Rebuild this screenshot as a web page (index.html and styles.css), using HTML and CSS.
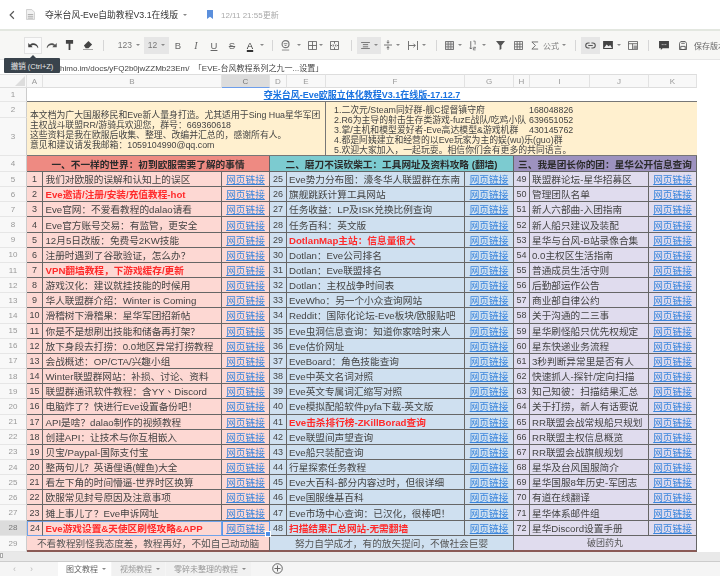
FILE: index.html
```html
<!DOCTYPE html>
<html lang="zh-CN">
<head>
<meta charset="utf-8">
<title>夺米台风-Eve自助教程V3.1在线版</title>
<link rel="stylesheet" href="styles.css">
</head>
<body>
<div class="app">
  <header class="topbar">
    <svg class="ic back" viewBox="0 0 8 12" width="6" height="10"><path d="M6.5 1 1.5 6l5 5" fill="none" stroke="#555" stroke-width="1.5"/></svg>
    <svg class="ic doc" viewBox="0 0 10 12" width="9" height="11"><path d="M.5.5h6l3 3v8H.5z" fill="#f1f1f1" stroke="#ccc"/><path d="M2 6h6M2 8h6M2 10h6" stroke="#aaa"/></svg>
    <span class="doc-title">夺米台风-Eve自助教程V3.1在线版</span>
    <span class="caret title-caret"></span>
    <svg class="ic mark" viewBox="0 0 6 9" width="6" height="9"><path d="M0 0h6v9L3 6.8 0 9z" fill="#5b8fdc"/></svg>
    <span class="updated">12/11 21:55更新</span>
  </header>

  <div class="toolbar">
    <span class="tool boxed"><svg viewBox="0 0 12 8" width="11" height="7"><path d="M11 7C9.500 3.500 6 2.500 3.500 4L5 6H0V1l2 2C5 0 10 1 11.500 6z" fill="#444"/></svg></span>
    <span class="tool"><svg viewBox="0 0 12 8" width="11" height="7"><path d="M1 7C2.500 3.500 6 2.500 8.500 4L7 6h5V1l-2 2C7 0 2 1 .5 6z" fill="#555"/></svg></span>
    <span class="tool"><svg viewBox="0 0 10 11" width="9" height="10"><path d="M1 0h8v4H6v7H4V4H1z" fill="#444"/></svg></span>
    <span class="tool"><svg viewBox="0 0 11 11" width="10" height="10"><path d="M1 6 6 1l4 4-4 4H3z" fill="#444"/><path d="M0 10.500h11" stroke="#999"/></svg></span>
    <span class="sep"></span>
    <span class="tool num">123</span>
    <span class="caret"></span>
    <span class="tool active">12<span class="caret"></span></span>
    <span class="tool letter">B</span>
    <span class="tool letter it">I</span>
    <span class="tool letter ul">U</span>
    <span class="tool letter st">S</span>
    <span class="tool letter color">A</span>
    <span class="caret"></span>
    <span class="sep"></span>
    <span class="tool"><svg viewBox="0 0 11 12" width="10" height="11"><circle cx="5" cy="4.500" r="3.800" fill="none" stroke="#777" stroke-width="1.300"/><path d="M3 4h4M4 6h2" stroke="#777"/><path d="M1 11h8" stroke="#aaa" stroke-width="1.500"/></svg></span>
    <span class="caret"></span>
    <span class="tool"><svg viewBox="0 0 10 10" width="9" height="9"><path d="M.5.5h9v9h-9zM5 .5v9M.5 5h9" fill="none" stroke="#666"/></svg></span>
    <span class="caret"></span>
    <span class="tool"><svg viewBox="0 0 10 10" width="9" height="9"><path d="M.5.5h9v9h-9zM5 .5v2.500M5 7v2.500M.5 5h2M7.500 5h2M3 4 4.500 5 3 6M7 4 5.500 5 7 6" fill="none" stroke="#666"/></svg></span>
    <span class="sep"></span>
    <span class="tool active"><svg viewBox="0 0 10 8" width="9" height="7"><path d="M0 .5h10M2 3h6M2 5.500h6M0 7.500h10" stroke="#666"/></svg><span class="caret"></span></span>
    <span class="tool pair"><svg viewBox="0 0 9 11" width="8" height="10"><path d="M0 5.500h9M4.500 0v3.500M4.500 7v4M3 2l1.500 1.500L6 2M3 9l1.500-1.500L6 9" fill="none" stroke="#666"/></svg><span class="caret"></span></span>
    <span class="tool pair"><svg viewBox="0 0 11 10" width="10" height="9"><path d="M.5 0v10M10.500 0v10M1 5h7M6 3l2 2-2 2" fill="none" stroke="#666"/></svg><span class="caret"></span></span>
    <span class="sep"></span>
    <span class="tool pair"><svg viewBox="0 0 10 10" width="9" height="9"><path d="M.5.5h9v9h-9z" fill="#ddd" stroke="#666"/><path d="M3.500 1v8M6.500 1v8M1 3.500h8M1 6.500h8" stroke="#777"/></svg><span class="caret"></span></span>
    <span class="tool"><svg viewBox="0 0 8 12" width="7" height="11"><path d="M2 1v9M.5 8.500 2 10l1.500-1.500" fill="none" stroke="#666"/><path d="M5 1h2v4M5 8h2.500v1H5v2h2.500" fill="none" stroke="#777"/></svg></span>
    <span class="caret"></span>
    <span class="tool"><svg viewBox="0 0 10 10" width="9" height="9"><path d="M0 0h10L6 5v4L4 10V5z" fill="#555"/></svg></span>
    <span class="tool"><svg viewBox="0 0 10 10" width="9" height="9"><path d="M.5.5h9v9h-9zM3.500 1v8M6.500 1v8M1 3.500h8M1 6.500h8" fill="none" stroke="#666"/></svg></span>
    <span class="tool"><svg viewBox="0 0 9 10" width="8" height="9"><path d="M8 1H1l4 4-4 4h7" fill="none" stroke="#666"/></svg></span>
    <span class="tool word">公式</span>
    <span class="caret"></span>
    <span class="sep"></span>
    <span class="tool active"><svg viewBox="0 0 12 7" width="11" height="7"><path d="M5 .8H3.500a2.700 2.700 0 0 0 0 5.400H5M7 .8h1.500a2.700 2.700 0 0 1 0 5.400H7M3.500 3.500h5" fill="none" stroke="#555" stroke-width="1.200"/></svg></span>
    <span class="tool pair"><svg viewBox="0 0 11 9" width="10" height="8"><path d="M0 0h11v9H0z" fill="#444"/><path d="M1 8l3-4 2 2 2-1.500L10 8z" fill="#eee"/></svg><span class="caret"></span></span>
    <span class="tool"><svg viewBox="0 0 11 10" width="10" height="9"><path d="M.5.5h10v9H.5zM.5 3h10M5 3v6.500" fill="none" stroke="#666"/><path d="M6 5h4v4H6z" fill="#999"/></svg></span>
    <span class="sep"></span>
    <span class="tool"><svg viewBox="0 0 11 10" width="10" height="9"><path d="M0 0h11v8H4L2 10V8H0z" fill="#444"/><path d="M3 4h1M5 4h1M7 4h1" stroke="#eee"/></svg></span>
    <span class="tool"><svg viewBox="0 0 9 10" width="8" height="9"><path d="M.5 2.500 2 .5h5l1.500 2v7h-8z" fill="none" stroke="#555"/><path d="M2.500 2.500h4M2 6h5v3.500H2z" fill="none" stroke="#555"/></svg></span>
    <span class="tool save-text">保存版本</span>
  </div>

  <div class="tooltip">撤销 (Ctrl+Z)</div>

  <div class="formula">https://shimo.im/docs/yFQ2b0jwZZMb23Em/&nbsp; 「EVE-台风教程系列之九一...设置」</div>

  <main class="sheet">
    <div class="corner"></div>
    <div class="ch">A</div><div class="ch">B</div><div class="ch ch-on">C</div><div class="ch">D</div><div class="ch">E</div><div class="ch">F</div><div class="ch">G</div><div class="ch">H</div><div class="ch">I</div><div class="ch">J</div><div class="ch">K</div>

    <div class="rh">1</div>
    <div class="sheet-title"><a>夺米台风-Eve欧服立体化教程V3.1在线版-17.12.7</a></div>

    <div class="rh">2</div>
    <div class="intro intro-left">
      <p>本文档为广大国服移民和Eve新人量身打造。尤其适用于Sing Hua星华军团</p>
      <p>主权战斗联盟RR/游骑兵欢迎您，群号：669360618</p>
      <p>这些资料是我在欧服后收集、整理、改编并汇总的，感谢所有人。</p>
      <p>意见和建议请发我邮箱：1059104990@qq.com</p>
    </div>
    <div class="intro intro-right">
      <p><span class="group">1.二次元/Steam同好群-舰C提督镇守府</span>168048826</p>
      <p><span class="group">2.R6为主导的射击生存类游戏-fuzE战队/吃鸡小队</span>639651052</p>
      <p><span class="group">3.掌/主机和模型爱好者-Eve高达模型&amp;游戏机群</span>430145762</p>
      <p>4.都是阿姨建立和经营的以Eve玩家为主的娱(wu)乐(guo)群</p>
      <p>5.欢迎大家加入，一起玩耍。相信你们会有更多的共同语言。</p>
    </div>
    <div class="rh">3</div>

    <div class="rh">4</div>
    <div class="head h1">一、不一样的世界：初到欧服需要了解的事情</div>
    <div class="head h2">二、磨刀不误砍柴工：工具网址及资料攻略 (翻墙)</div>
    <div class="head h3">三、我是团长你的团：星华公开信息查询</div>

    <div class="rh">5</div><div class="n s1">1</div><div class="t s1">我们对欧服的误解和认知上的误区</div><a class="l s1">网页链接</a><div class="n s2">25</div><div class="t s2">Eve势力分布图：濠冬华人联盟群在东南</div><a class="l s2">网页链接</a><div class="n s3">49</div><div class="t s3">联盟群论坛-星华招募区</div><a class="l s3">网页链接</a>
    <div class="rh">6</div><div class="n s1">2</div><div class="t s1 hot">Eve邀请/注册/安装/充值教程-hot</div><a class="l s1">网页链接</a><div class="n s2">26</div><div class="t s2">旗舰跳跃计算工具网站</div><a class="l s2">网页链接</a><div class="n s3">50</div><div class="t s3">管理团队名单</div><a class="l s3">网页链接</a>
    <div class="rh">7</div><div class="n s1">3</div><div class="t s1">Eve官网：不爱看教程的dalao请看</div><a class="l s1">网页链接</a><div class="n s2">27</div><div class="t s2">任务收益：LP及ISK兑换比例查询</div><a class="l s2">网页链接</a><div class="n s3">51</div><div class="t s3">新人六部曲-入团指南</div><a class="l s3">网页链接</a>
    <div class="rh">8</div><div class="n s1">4</div><div class="t s1">Eve官方账号交易：有监管，更安全</div><a class="l s1">网页链接</a><div class="n s2">28</div><div class="t s2">任务百科：英文版</div><a class="l s2">网页链接</a><div class="n s3">52</div><div class="t s3">新人船只建议及装配</div><a class="l s3">网页链接</a>
    <div class="rh">9</div><div class="n s1">5</div><div class="t s1">12月5日改版：免费号2KW技能</div><a class="l s1">网页链接</a><div class="n s2">29</div><div class="t s2 hot">DotlanMap主站：信息量很大</div><a class="l s2">网页链接</a><div class="n s3">53</div><div class="t s3">星华与台风-B站录像合集</div><a class="l s3">网页链接</a>
    <div class="rh">10</div><div class="n s1">6</div><div class="t s1">注册时遇到了谷歌验证，怎么办？</div><a class="l s1">网页链接</a><div class="n s2">30</div><div class="t s2">Dotlan：Eve公司排名</div><a class="l s2">网页链接</a><div class="n s3">54</div><div class="t s3">0.0主权区生活指南</div><a class="l s3">网页链接</a>
    <div class="rh">11</div><div class="n s1">7</div><div class="t s1 hot">VPN翻墙教程，下游戏缓存/更新</div><a class="l s1">网页链接</a><div class="n s2">31</div><div class="t s2">Dotlan：Eve联盟排名</div><a class="l s2">网页链接</a><div class="n s3">55</div><div class="t s3">普通成员生活守则</div><a class="l s3">网页链接</a>
    <div class="rh">12</div><div class="n s1">8</div><div class="t s1">游戏汉化：建议就挂技能的时候用</div><a class="l s1">网页链接</a><div class="n s2">32</div><div class="t s2">Dotlan：主权战争时间表</div><a class="l s2">网页链接</a><div class="n s3">56</div><div class="t s3">后勤部运作公告</div><a class="l s3">网页链接</a>
    <div class="rh">13</div><div class="n s1">9</div><div class="t s1">华人联盟群介绍：Winter is Coming</div><a class="l s1">网页链接</a><div class="n s2">33</div><div class="t s2">EveWho：另一个小众查询网站</div><a class="l s2">网页链接</a><div class="n s3">57</div><div class="t s3">商业部自律公约</div><a class="l s3">网页链接</a>
    <div class="rh">14</div><div class="n s1">10</div><div class="t s1">滑稽树下滑稽果：星华军团招新帖</div><a class="l s1">网页链接</a><div class="n s2">34</div><div class="t s2">Reddit：国际化论坛-Eve板块/欧服贴吧</div><a class="l s2">网页链接</a><div class="n s3">58</div><div class="t s3">关于沟通的二三事</div><a class="l s3">网页链接</a>
    <div class="rh">15</div><div class="n s1">11</div><div class="t s1">你是不是想刷出技能和储备再打架？</div><a class="l s1">网页链接</a><div class="n s2">35</div><div class="t s2">Eve虫洞信息查询：知道你家啥时来人</div><a class="l s2">网页链接</a><div class="n s3">59</div><div class="t s3">星华刷怪船只优先权规定</div><a class="l s3">网页链接</a>
    <div class="rh">16</div><div class="n s1">12</div><div class="t s1">放下身段去打捞：0.0地区异常打捞教程</div><a class="l s1">网页链接</a><div class="n s2">36</div><div class="t s2">Eve估价网址</div><a class="l s2">网页链接</a><div class="n s3">60</div><div class="t s3">星东快递业务流程</div><a class="l s3">网页链接</a>
    <div class="rh">17</div><div class="n s1">13</div><div class="t s1">会战概述：OP/CTA/兴趣小组</div><a class="l s1">网页链接</a><div class="n s2">37</div><div class="t s2">EveBoard：角色技能查询</div><a class="l s2">网页链接</a><div class="n s3">61</div><div class="t s3">3秒判断异常里是否有人</div><a class="l s3">网页链接</a>
    <div class="rh">18</div><div class="n s1">14</div><div class="t s1">Winter联盟群网站：补损、讨论、资料</div><a class="l s1">网页链接</a><div class="n s2">38</div><div class="t s2">Eve中英文名词对照</div><a class="l s2">网页链接</a><div class="n s3">62</div><div class="t s3">快速抓人-探针/定向扫描</div><a class="l s3">网页链接</a>
    <div class="rh">19</div><div class="n s1">15</div><div class="t s1">联盟群通讯软件教程：含YY、Discord</div><a class="l s1">网页链接</a><div class="n s2">39</div><div class="t s2">Eve英文专属词汇缩写对照</div><a class="l s2">网页链接</a><div class="n s3">63</div><div class="t s3">知己知彼：扫描结果汇总</div><a class="l s3">网页链接</a>
    <div class="rh">20</div><div class="n s1">16</div><div class="t s1">电脑炸了？快进行Eve设置备份吧！</div><a class="l s1">网页链接</a><div class="n s2">40</div><div class="t s2">Eve模拟配船软件pyfa下载-英文版</div><a class="l s2">网页链接</a><div class="n s3">64</div><div class="t s3">关于打捞，新人有话要说</div><a class="l s3">网页链接</a>
    <div class="rh">21</div><div class="n s1">17</div><div class="t s1">API是啥？dalao制作的视频教程</div><a class="l s1">网页链接</a><div class="n s2">41</div><div class="t s2 hot">Eve击杀排行榜-ZKillBorad查询</div><a class="l s2">网页链接</a><div class="n s3">65</div><div class="t s3">RR联盟会战常规船只规划</div><a class="l s3">网页链接</a>
    <div class="rh">22</div><div class="n s1">18</div><div class="t s1">创建API：让技术与你互相嵌入</div><a class="l s1">网页链接</a><div class="n s2">42</div><div class="t s2">Eve联盟间声望查询</div><a class="l s2">网页链接</a><div class="n s3">66</div><div class="t s3">RR联盟主权信息概览</div><a class="l s3">网页链接</a>
    <div class="rh">23</div><div class="n s1">19</div><div class="t s1">贝宝/Paypal-国际支付宝</div><a class="l s1">网页链接</a><div class="n s2">43</div><div class="t s2">Eve船只装配查询</div><a class="l s2">网页链接</a><div class="n s3">67</div><div class="t s3">RR联盟会战旗舰规划</div><a class="l s3">网页链接</a>
    <div class="rh">24</div><div class="n s1">20</div><div class="t s1">整两句儿？英语俚语(鲤鱼)大全</div><a class="l s1">网页链接</a><div class="n s2">44</div><div class="t s2">行星探索任务教程</div><a class="l s2">网页链接</a><div class="n s3">68</div><div class="t s3">星华及台风国服简介</div><a class="l s3">网页链接</a>
    <div class="rh">25</div><div class="n s1">21</div><div class="t s1">看左下角的时间懵逼-世界时区换算</div><a class="l s1">网页链接</a><div class="n s2">45</div><div class="t s2">Eve大百科-部分内容过时，但很详细</div><a class="l s2">网页链接</a><div class="n s3">69</div><div class="t s3">星华国服8年历史-军团志</div><a class="l s3">网页链接</a>
    <div class="rh">26</div><div class="n s1">22</div><div class="t s1">欧服常见封号原因及注意事项</div><a class="l s1">网页链接</a><div class="n s2">46</div><div class="t s2">Eve国服维基百科</div><a class="l s2">网页链接</a><div class="n s3">70</div><div class="t s3">有道在线翻译</div><a class="l s3">网页链接</a>
    <div class="rh">27</div><div class="n s1">23</div><div class="t s1">摊上事儿了？Eve申诉网址</div><a class="l s1">网页链接</a><div class="n s2">47</div><div class="t s2">Eve市场中心查询：已汉化，很棒吧！</div><a class="l s2">网页链接</a><div class="n s3">71</div><div class="t s3">星华体系邮件组</div><a class="l s3">网页链接</a>
    <div class="rh rh-on">28</div><div class="n s1 sel-a">24</div><div class="t s1 hot sel-b">Eve游戏设置&amp;天使区刷怪攻略&amp;APP</div><a class="l s1 sel-c">网页链接</a><div class="n s2">48</div><div class="t s2 hot">扫描结果汇总网站-无需翻墙</div><a class="l s2">网页链接</a><div class="n s3">72</div><div class="t s3">星华Discord设置手册</div><a class="l s3">网页链接</a>
    <div class="rh">29</div><div class="foot f1">不看教程别怪我态度差，教程再好，不如自己动动脑</div><div class="foot f2">努力自学成才，有的放矢提问，不做社会巨婴</div><div class="foot f3">破团药丸</div>
  </main>

  <div class="hscroll"><span class="hscroll-btn"></span></div>

  <nav class="tabs">
    <span class="nav-arrow">‹</span>
    <span class="nav-arrow nav-next">›</span>
    <span class="tab tab-on">图文教程<span class="caret"></span></span>
    <span class="tab">视频教程<span class="caret"></span></span>
    <span class="tab">零碎未整理的教程<span class="caret"></span></span>
    <svg class="add" viewBox="0 0 11 11" width="11" height="11"><circle cx="5.500" cy="5.500" r="4.800" fill="none" stroke="#666"/><path d="M5.500 2.500v6M2.500 5.500h6" stroke="#666"/></svg>
  </nav>
</div>
</body>
</html>
```

FILE: styles.css
```css
* { box-sizing: border-box; }
html, body { margin: 0; padding: 0; }
body { width: 720px; height: 576px; overflow: hidden; background: #fff; }

.app {
  position: relative;
  width: 720px;
  height: 576px;
  display: flex;
  flex-direction: column;
  overflow: hidden;
  font-family: "Liberation Sans", "Noto Sans CJK SC", sans-serif;
  color: #444;
  filter: blur(0.35px);
}
p { margin: 0; }

/* top bar */
.topbar {
  height: 29px;
  flex: none;
  display: flex;
  align-items: center;
  padding-left: 9px;
}
.back { margin-right: 11px; }
.doc { margin-right: 10px; }
.doc-title { font-size: 8.8px; color: #333; width: 129px; white-space: nowrap; }
.title-caret { margin-left: 9px; margin-right: 20px; border-top-color: #444; }
.mark { margin-right: 8px; }
.updated { font-size: 8px; color: #aaa; white-space: nowrap; }

.caret {
  display: inline-block;
  justify-self: center;
  width: 0; height: 0;
  border-left: 2px solid transparent;
  border-right: 2px solid transparent;
  border-top: 2px solid #888;
}

/* toolbar */
.toolbar {
  flex: none;
  height: 31px;
  padding: 0 0 0 24px;
  background: #f7f7f5;
  border-top: 2px solid #e3e7e0;
  border-bottom: 1px solid #e6e6e6;
  display: grid;
  grid-template-columns: 18px 18px 18px 20px 10px 24px 12px 25px 18px 18px 18px 18px 18px 6px 14px 14px 12px 14px 4px 22px 12px 24px 21px 29px 10px 25px 12px 12px 20px 16px 18px 14px 12px 11px 19px 24px 18px 12px 20px 18px 40px;
  align-items: center;
  justify-items: center;
}
.tool {
  height: 17px;
  width: 100%;
  display: flex;
  align-items: center;
  justify-content: center;
  gap: 4px;
  font-size: 8.5px;
  color: #777;
  white-space: nowrap;
}
.boxed { background: #fafafa; border: 1px solid #e2e2e2; }
.active { background: #e6e6e6; }
.num { justify-content: flex-end; }
.letter { font-size: 9.5px; color: #666; }
.it { font-style: italic; font-family: "Liberation Serif", serif; font-size: 10px; }
.ul { text-decoration: underline; }
.st { text-decoration: line-through; }
.color { color: #333; text-decoration: underline; text-decoration-thickness: 1.5px; }
.pair { gap: 4px; }
.word { font-size: 8px; overflow: visible; }
.save-text { justify-content: flex-start; padding-left: 2px; font-size: 8px; color: #666; }
.sep { width: 1px; height: 11px; background: #d6d6d6; }

/* tooltip over the toolbar */
.tooltip {
  position: absolute;
  left: 4px; top: 58px;
  width: 56px; height: 15px;
  display: flex;
  align-items: center;
  justify-content: center;
  background: #39434c;
  color: #e8e8e8;
  font-size: 7.5px;
  border-radius: 1px;
  white-space: nowrap;
}
.tooltip::before {
  content: "";
  position: absolute;
  left: 26px; top: -3px;
  border-left: 3px solid transparent;
  border-right: 3px solid transparent;
  border-bottom: 3px solid #39434c;
}

/* formula bar */
.formula {
  flex: none;
  height: 14px;
  padding-left: 32px;
  display: flex;
  align-items: center;
  font-size: 8px;
  color: #444;
  background: #fff;
  white-space: nowrap;
}

/* sheet grid */
.sheet {
  flex: none;
  width: 697px;
  display: grid;
  grid-template-columns: 27px 16px 179px 48px 17px 39px 139px 49px 16px 60px 59px 48px;
  grid-template-rows: 14px 14px 16px 38px 16px repeat(24, 15.16px) 16px;
  font-size: 9.67px;
}
.corner, .ch {
  background: #f8f8f8;
  border-top: 1px solid #ddd;
  border-right: 1px solid #e2e2e2;
  border-bottom: 1px solid #ddd;
}
.corner { position: relative; overflow: hidden; }
.corner::after {
  content: "";
  position: absolute;
  right: 1px; bottom: 1px;
  border-left: 10px solid transparent;
  border-bottom: 10px solid #ddd;
}
.ch, .rh {
  display: flex;
  align-items: center;
  justify-content: center;
  font-size: 8px;
  color: #999;
}
.ch-on { background: #dcdcdc; border-bottom: 1px solid #6d9eeb; color: #777; }
.rh { background: #f8f8f8; border-right: 1px solid #ccc; border-bottom: 1px solid #e6e6e6; }
.rh-on { background: #dcdcdc; color: #777; }

.sheet-title {
  grid-column: span 11;
  display: flex;
  justify-content: center;
  align-items: center;
  font-size: 9px;
  font-weight: bold;
  border-bottom: 1px solid #777;
}
.sheet-title a { color: #1a73e0; text-decoration: underline; }

.intro {
  grid-row: span 2;
  display: flex;
  flex-direction: column;
  justify-content: flex-end;
  font-size: 8.85px;
  line-height: 10px;
  background: #fff0cf;
  white-space: nowrap;
  color: #444;
  border-bottom: 1px solid #777;
}
.intro-left { grid-column: span 5; padding: 0 0 5px 3px; border-right: 1px solid #777; }
.intro-right { grid-column: span 6; padding: 0 0 0 8px; }
.group { display: inline-block; width: 195px; }

.head, .t, .foot { font-family: "Liberation Sans", "Noto Sans CJK TC", sans-serif; }
.head {
  display: flex;
  align-items: center;
  justify-content: center;
  font-weight: bold;
  color: #2b2b2b;
  white-space: nowrap;
  border-right: 1px solid #666;
  border-bottom: 1px solid #666;
}
.h1 { grid-column: span 3; background: #ee8a82; }
.h2 { grid-column: span 4; background: #7ccbd0; }
.h3 { grid-column: span 4; background: #9d92bf; }

.n, .t, .l, .foot {
  display: flex;
  align-items: center;
  white-space: nowrap;
  border-right: 1px solid #666;
  border-bottom: 1px solid #666;
}
.n { justify-content: center; font-size: 9px; color: #444; }
.t { padding-left: 2.500px; color: #444; }
.t.s2, .t.s3 { grid-column: span 2; padding-left: 2px; }
.l { justify-content: center; color: #3b86dc; text-decoration: underline; }
.s1 { background: #fdd8d3; }
.s2 { background: #cfe0f0; }
.s3 { background: #e0dcee; }
.hot { color: #ff2b2b; font-weight: bold; }

.foot { justify-content: center; border-bottom: 2px solid #8a5a55; color: #555; }
.f1 { grid-column: span 3; background: #fdd8d3; }
.f2 { grid-column: span 4; background: #cfe0f0; }
.f3 { grid-column: span 4; background: #e0dcee; font-size: 9px; }

/* selected range in row 28 */
.sel-a, .sel-b { border-top: 1px solid #6fa3ea; border-bottom: 1px solid #6fa3ea; }
.sel-a { border-left: 1px solid #6fa3ea; }
.sel-b { border-right: 1px solid #6fa3ea; }
.sel-c { position: relative; outline: 1px solid #5b97ea; outline-offset: -1px; }
.sel-c::after {
  content: "";
  position: absolute;
  right: -2px; bottom: -2px;
  width: 4px; height: 4px;
  background: #4f8fe8;
  border: 1px solid #fff;
  z-index: 1;
}

/* bottom */
.hscroll {
  flex: none;
  height: 10px;
  width: 720px;
  background: #e9e9e9;
  border-bottom: 1px solid #ccc;
  position: relative;
}
.hscroll-btn {
  position: absolute;
  left: 0; top: 1px;
  width: 3px; height: 5px;
  background: #fafafa;
  border: 1px solid #aaa;
}
.tabs {
  flex: 1;
  display: flex;
  align-items: stretch;
  padding-left: 6px;
  background: #f5f5f5;
  font-size: 8px;
  color: #999;
}
.nav-arrow {
  width: 17px;
  display: flex;
  align-items: center;
  justify-content: center;
  color: #bbb;
  font-size: 9px;
}
.nav-next { margin-right: 18px; }
.tab {
  display: flex;
  align-items: center;
  justify-content: center;
  gap: 4px;
  padding: 0 5px 0 8px;
  margin-right: 1px;
  background: #f1f1f1;
  white-space: nowrap;
}
.tab-on { background: #fff; color: #666; }
.add { align-self: center; margin-left: 20px; }
```
